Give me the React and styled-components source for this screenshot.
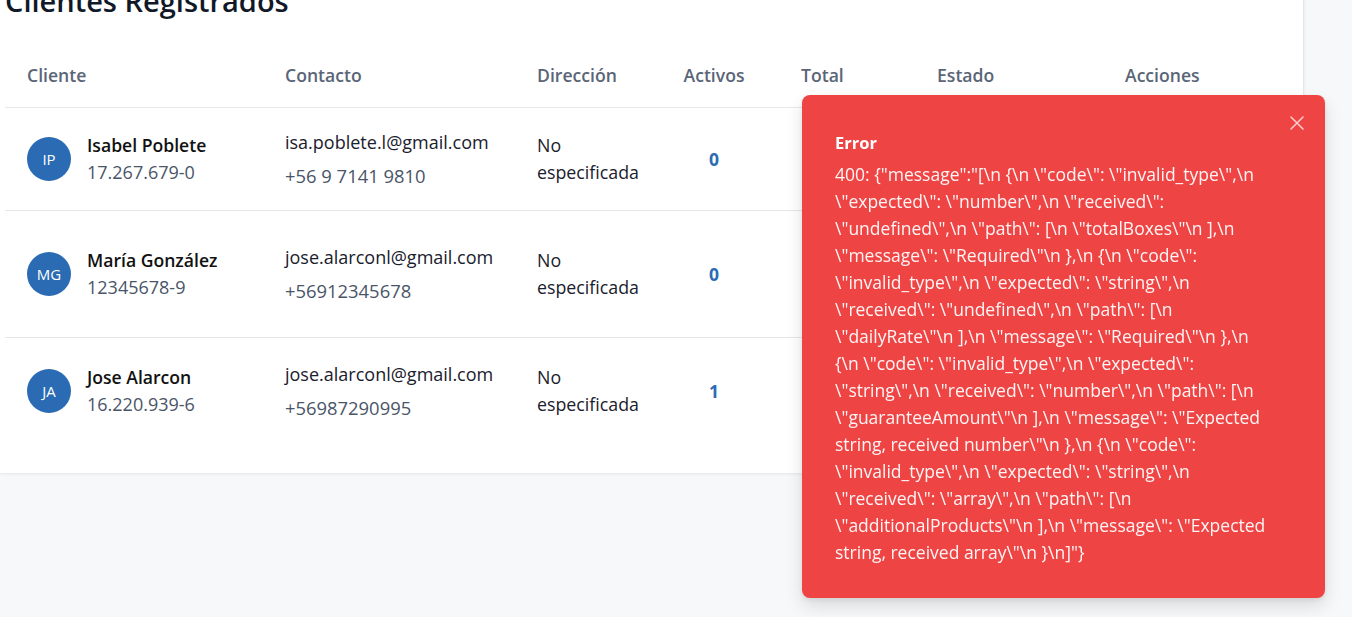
import React from 'react';
import styled, { createGlobalStyle } from 'styled-components';

const GlobalStyle = createGlobalStyle`
  html, body {
    margin: 0;
    padding: 0;
    background: #f7f8fa;
    font-family: "Open Sans", "Noto Sans", sans-serif;
    color: #1a202c;
  }
  * { box-sizing: border-box; }
`;

const Page = styled.div`
  min-height: 617px;
  overflow: hidden;
`;

const Card = styled.section`
  width: 1304px;
  background: #ffffff;
  border-right: 1px solid #e5e7eb;
  box-shadow: 0 1px 3px rgba(0, 0, 0, 0.08);
  margin-top: -15px;
  padding: 0 0 29px 5px;
`;

const Title = styled.h2`
  margin: 0;
  height: 66px;
  font-size: 29px;
  font-weight: 600;
  line-height: 32px;
  color: #111827;
`;

const Grid = styled.div`
  display: grid;
  grid-template-columns: 258px 252px 146px 118px 136px 188px 199px;
`;

const HeadCell = styled.div`
  height: 57px;
  display: flex;
  align-items: center;
  justify-content: ${(p) => (p.$center ? 'center' : 'flex-start')};
  padding: ${(p) => (p.$center ? '0 34px 8px 22px' : '0 22px 8px')};
  font-size: 17.6px;
  font-weight: 600;
  color: #5a6577;
  border-bottom: 1px solid #e5e7eb;
`;

const Cell = styled.div`
  min-height: ${(p) => p.$h}px;
  display: flex;
  flex-direction: column;
  justify-content: center;
  align-items: ${(p) => (p.$center ? 'center' : 'flex-start')};
  padding: ${(p) => (p.$center ? '0 34px 0 22px' : '0 22px')};
  border-bottom: ${(p) => (p.$last ? 'none' : '1px solid #e5e7eb')};
  font-size: 17.8px;
  line-height: 27px;
`;

const ClientBox = styled.div`
  display: flex;
  align-items: center;
  gap: 16px;
`;

const Avatar = styled.div`
  width: 44px;
  height: 44px;
  border-radius: 50%;
  background: #2a6bb3;
  color: #ffffff;
  display: flex;
  align-items: center;
  justify-content: center;
  font-size: 15px;
  flex-shrink: 0;
`;

const Name = styled.div`
  font-size: 17.6px;
  font-weight: 600;
  color: #111111;
  line-height: 27px;
`;

const Sub = styled.div`
  color: #4a5568;
  font-size: 18px;
  line-height: 27px;
`;

const Email = styled.div`
  color: #1a202c;
  font-size: 18px;
  line-height: 27px;
`;

const Phone = styled.div`
  color: #4a5568;
  font-size: 18.4px;
  line-height: 27px;
  margin-top: 6px;
`;

const Address = styled.div`
  color: #1a202c;
  width: 112px;
`;

const Count = styled.span`
  font-weight: 700;
  font-size: 17.5px;
  color: #2a6bb3;
`;

const Toast = styled.div`
  position: fixed;
  top: 95px;
  left: 802px;
  width: 523px;
  background: #ef4444;
  border-radius: 8px;
  padding: 34px 30px 32px 33px;
  box-shadow: 0 8px 18px rgba(0, 0, 0, 0.12), 0 2px 5px rgba(0, 0, 0, 0.08);
  color: #ffffff;
`;

const CloseButton = styled.button`
  position: absolute;
  top: 20px;
  right: 20px;
  width: 16px;
  height: 16px;
  padding: 0;
  border: none;
  background: transparent;
  cursor: pointer;
  display: flex;
  align-items: center;
  justify-content: center;
`;

const ToastTitle = styled.div`
  font-size: 16.5px;
  font-weight: 700;
  line-height: 27px;
`;

const ToastBody = styled.div`
  margin-top: 5px;
  font-size: 17.5px;
  line-height: 27px;
  color: rgba(255, 255, 255, 0.94);
`;

const Line = styled.span`
  display: block;
  white-space: nowrap;
`;

const clients = [
  { initials: 'IP', name: 'Isabel Poblete', rut: '17.267.679-0', email: 'isa.poblete.l@gmail.com', phone: '+56 9 7141 9810', active: 0, h: 103 },
  { initials: 'MG', name: 'María González', rut: '12345678-9', email: 'jose.alarconl@gmail.com', phone: '+56912345678', active: 0, h: 127 },
  { initials: 'JA', name: 'Jose Alarcon', rut: '16.220.939-6', email: 'jose.alarconl@gmail.com', phone: '+56987290995', active: 1, h: 106 },
];

const headers = ['Cliente', 'Contacto', 'Dirección', 'Activos', 'Total', 'Estado', 'Acciones'];

const errorLines = [
  String.raw`400: {"message":"[\n {\n \"code\": \"invalid_type\",\n`,
  String.raw`\"expected\": \"number\",\n \"received\":`,
  String.raw`\"undefined\",\n \"path\": [\n \"totalBoxes\"\n ],\n`,
  String.raw`\"message\": \"Required\"\n },\n {\n \"code\":`,
  String.raw`\"invalid_type\",\n \"expected\": \"string\",\n`,
  String.raw`\"received\": \"undefined\",\n \"path\": [\n`,
  String.raw`\"dailyRate\"\n ],\n \"message\": \"Required\"\n },\n`,
  String.raw`{\n \"code\": \"invalid_type\",\n \"expected\":`,
  String.raw`\"string\",\n \"received\": \"number\",\n \"path\": [\n`,
  String.raw`\"guaranteeAmount\"\n ],\n \"message\": \"Expected`,
  String.raw`string, received number\"\n },\n {\n \"code\":`,
  String.raw`\"invalid_type\",\n \"expected\": \"string\",\n`,
  String.raw`\"received\": \"array\",\n \"path\": [\n`,
  String.raw`\"additionalProducts\"\n ],\n \"message\": \"Expected`,
  String.raw`string, received array\"\n }\n]"}`,
];

export default function App() {
  return (
    <Page>
      <GlobalStyle />
      <Card>
        <Title>Clientes Registrados</Title>
        <Grid>
          {headers.map((h) => (
            <HeadCell key={h} $center={h === 'Activos'}>{h}</HeadCell>
          ))}
          {clients.map((c, i) => {
            const last = i === clients.length - 1;
            return (
              <React.Fragment key={c.initials}>
                <Cell $h={c.h} $last={last}>
                  <ClientBox>
                    <Avatar>{c.initials}</Avatar>
                    <div>
                      <Name>{c.name}</Name>
                      <Sub>{c.rut}</Sub>
                    </div>
                  </ClientBox>
                </Cell>
                <Cell $h={c.h} $last={last}>
                  <Email>{c.email}</Email>
                  <Phone>{c.phone}</Phone>
                </Cell>
                <Cell $h={c.h} $last={last}>
                  <Address>No especificada</Address>
                </Cell>
                <Cell $h={c.h} $last={last} $center>
                  <Count>{c.active}</Count>
                </Cell>
                <Cell $h={c.h} $last={last} />
                <Cell $h={c.h} $last={last} />
                <Cell $h={c.h} $last={last} />
              </React.Fragment>
            );
          })}
        </Grid>
      </Card>
      <Toast role="alert">
        <CloseButton aria-label="Cerrar">
          <svg width="14" height="14" viewBox="0 0 14 14">
            <path d="M1 1L13 13M13 1L1 13" stroke="rgba(255,255,255,0.75)" strokeWidth="1.5" strokeLinecap="round" />
          </svg>
        </CloseButton>
        <ToastTitle>Error</ToastTitle>
        <ToastBody>
          {errorLines.map((l, i) => (
            <Line key={i}>{l}</Line>
          ))}
        </ToastBody>
      </Toast>
    </Page>
  );
}
